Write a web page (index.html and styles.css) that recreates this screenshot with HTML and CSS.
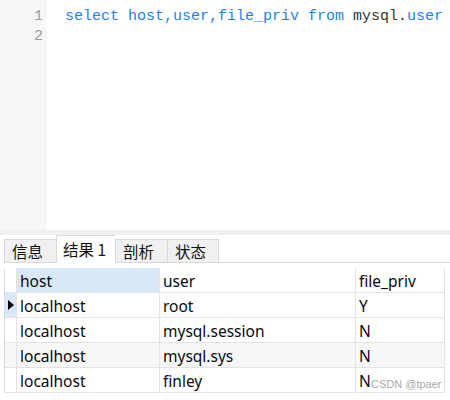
FILE: index.html
```html
<!DOCTYPE html>
<html>
<head>
<meta charset="utf-8">
<link rel="stylesheet" href="styles.css">
</head>
<body>
<div class="app">
  <div class="editor">
    <div class="gutter">
      <div class="ln">1</div>
      <div class="ln">2</div>
    </div>
    <div class="code">
      <div class="line"><span class="kw">select host,user,file_priv from</span> mysql.<span class="kw">user</span></div>
      <div class="line"></div>
    </div>
  </div>
  <div class="splitter"></div>
  <div class="tabbar">
    <div class="tab">信息</div>
    <div class="tab active">结果 1</div>
    <div class="tab">剖析</div>
    <div class="tab">状态</div>
    <div class="tabfill"></div>
  </div>
  <div class="gridwrap">
    <div class="grid">
      <div class="ind head"></div>
      <div class="cell head sel">host</div>
      <div class="cell head">user</div>
      <div class="cell head">file_priv</div>

      <div class="ind cur"><span class="arrow"></span></div>
      <div class="cell">localhost</div>
      <div class="cell">root</div>
      <div class="cell">Y</div>

      <div class="ind"></div>
      <div class="cell">localhost</div>
      <div class="cell">mysql.session</div>
      <div class="cell">N</div>

      <div class="ind alt"></div>
      <div class="cell alt">localhost</div>
      <div class="cell alt">mysql.sys</div>
      <div class="cell alt">N</div>

      <div class="ind"></div>
      <div class="cell">localhost</div>
      <div class="cell">finley</div>
      <div class="cell">N</div>
    </div>
    <div class="watermark">CSDN @tpaer</div>
  </div>
</div>
</body>
</html>
```
FILE: styles.css
```css
html, body {
  margin: 0;
  padding: 0;
  background: #ffffff;
}
.app {
  width: 450px;
  height: 400px;
  overflow: hidden;
  display: flex;
  flex-direction: column;
}
.editor {
  height: 230px;
  display: flex;
  flex-shrink: 0;
}
.gutter {
  width: 47px;
  background: #f7f7f7;
  padding-top: 7px;
  box-sizing: border-box;
  padding-right: 4px;
  text-align: right;
}
.ln {
  font-family: "Liberation Mono", monospace;
  font-size: 15px;
  line-height: 20px;
  color: #9a9a9a;
}
.code {
  flex: 1;
  padding-top: 7px;
  padding-left: 18px;
}
.line {
  font-family: "Liberation Mono", monospace;
  font-size: 15px;
  line-height: 20px;
  height: 20px;
  color: #333333;
  white-space: pre;
}
.kw {
  color: #1f7ff0;
}
.splitter {
  height: 5px;
  background: #f0f0f0;
  flex-shrink: 0;
}
.tabbar {
  height: 28px;
  display: flex;
  align-items: flex-end;
  padding-left: 4px;
  box-sizing: border-box;
  flex-shrink: 0;
}
.tab {
  height: 24px;
  box-sizing: border-box;
  border: 1px solid #d9d9d9;
  border-right: none;
  background: #f0f0f0;
  font-family: "Noto Sans CJK SC", "Noto Sans", sans-serif;
  font-size: 15.5px;
  line-height: 23px;
  color: #111111;
  padding: 0 7px;
  width: 52px;
  border-bottom: 1px solid #d9d9d9;
}
.tab.active {
  height: 28px;
  width: 59px;
  background: #ffffff;
  border-bottom: 1px solid #ffffff;
  line-height: 26px;
  padding: 0 6px;
}
.tab:nth-child(4) {
  border-right: 1px solid #d9d9d9;
}
.tabfill {
  flex: 1;
  height: 1px;
  background: #d9d9d9;
}
.gridwrap {
  position: relative;
  padding: 5px 0 0 4px;
  flex: 1;
}
.grid {
  display: grid;
  grid-template-columns: 12px 143px 196px 89px;
  grid-auto-rows: 25px;
  border-left: 1px solid #dcdcdc;
}
.cell, .ind {
  box-sizing: border-box;
  border-right: 1px solid #e3e3e3;
  border-bottom: 1px solid #e3e3e3;
  font-family: "Noto Sans", "Noto Sans CJK SC", sans-serif;
  font-size: 15.5px;
  line-height: 26px;
  color: #0a0a0a;
  padding-left: 3px;
  white-space: nowrap;
  overflow: hidden;
}
.ind {
  padding: 0;
  position: relative;
}
.cell.head.sel {
  background: #d9e8f7;
}
.ind.cur {
  background: #d9e8f7;
}
.alt {
  background: #f7f7f7;
}
.arrow {
  position: absolute;
  left: 3px;
  top: 7px;
  width: 0;
  height: 0;
  border-top: 5px solid transparent;
  border-bottom: 5px solid transparent;
  border-left: 6px solid #000000;
}
.watermark {
  position: absolute;
  left: 371px;
  top: 115px;
  font-family: "Liberation Sans", sans-serif;
  font-size: 11px;
  color: #a8a8a8;
}
```
